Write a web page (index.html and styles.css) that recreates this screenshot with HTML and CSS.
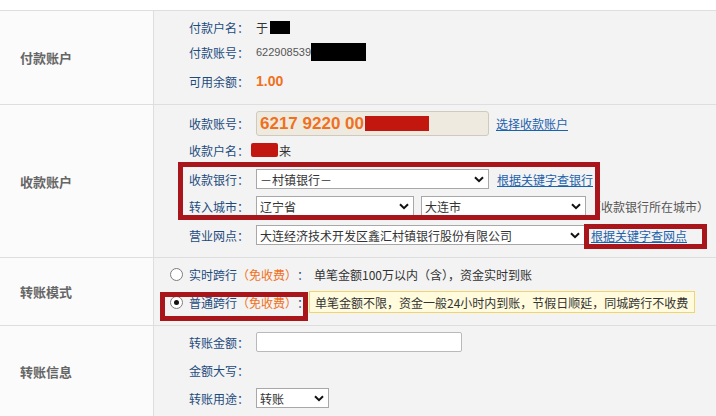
FILE: index.html
```html
<!DOCTYPE html>
<html lang="zh-CN">
<head>
<meta charset="utf-8">
<title>转账</title>
<link rel="stylesheet" href="styles.css">
</head>
<body>
<div class="page">
  <div class="form">
    <div class="row r1">
      <div class="head">付款账户</div>
      <div class="body">
        <div class="line l1"><span class="lbl">付款户名：</span><span class="val">于</span><span class="blk blk-name"></span></div>
        <div class="line l2"><span class="lbl">付款账号：</span><span class="num">622908539</span><span class="blk blk-acct"></span></div>
        <div class="line l3"><span class="lbl">可用余额：</span><span class="money">1.00</span></div>
      </div>
    </div>
    <div class="row r2">
      <div class="head">收款账户</div>
      <div class="body">
        <div class="line acct-line">
          <span class="lbl">收款账号：</span>
          <div class="acct-input"><span class="acct-num">6217 9220 00</span><span class="red red-acct"></span></div>
          <a class="link gap7" href="#">选择收款账户</a>
        </div>
        <div class="line name-line"><span class="lbl">收款户名：</span><span class="red red-name"></span><span class="val">来</span></div>
        <div class="line bank-line">
          <span class="lbl">收款银行：</span>
          <div class="sel w-bank"><span>－村镇银行－</span><svg class="chev" width="10" height="7" viewBox="0 0 10 7"><path d="M1 1.2 L5 5.2 L9 1.2" fill="none" stroke="#111" stroke-width="2"/></svg></div>
          <a class="link gap8" href="#">根据关键字查银行</a>
        </div>
        <div class="line city-line">
          <span class="lbl">转入城市：</span>
          <div class="sel w-prov"><span>辽宁省</span><svg class="chev" width="10" height="7" viewBox="0 0 10 7"><path d="M1 1.2 L5 5.2 L9 1.2" fill="none" stroke="#111" stroke-width="2"/></svg></div>
          <div class="sel w-city"><span>大连市</span><svg class="chev" width="10" height="7" viewBox="0 0 10 7"><path d="M1 1.2 L5 5.2 L9 1.2" fill="none" stroke="#111" stroke-width="2"/></svg></div>
          <span class="hint">（收款银行所在城市）</span>
        </div>
        <div class="line branch-line">
          <span class="lbl">营业网点：</span>
          <div class="sel w-branch"><span>大连经济技术开发区鑫汇村镇银行股份有限公司</span><svg class="chev" width="10" height="7" viewBox="0 0 10 7"><path d="M1 1.2 L5 5.2 L9 1.2" fill="none" stroke="#111" stroke-width="2"/></svg></div>
          <a class="link gap6" href="#">根据关键字查网点</a>
        </div>
      </div>
    </div>
    <div class="row r3">
      <div class="head">转账模式</div>
      <div class="body">
        <div class="line mode1">
          <span class="radio"></span>
          <span class="mode">实时跨行</span><span class="free">（免收费）</span><span class="mode">：</span>
          <span class="desc">单笔金额100万以内（含），资金实时到账</span>
        </div>
        <div class="line mode2">
          <span class="radio checked"></span>
          <span class="mode">普通跨行</span><span class="free">（免收费）</span><span class="mode">：</span>
          <span class="tip">单笔金额不限，资金一般24小时内到账，节假日顺延，同城跨行不收费</span>
        </div>
      </div>
    </div>
    <div class="row r4">
      <div class="head">转账信息</div>
      <div class="body">
        <div class="line amt-line"><span class="lbl">转账金额：</span><div class="text-input"></div></div>
        <div class="line cap-line"><span class="lbl">金额大写：</span></div>
        <div class="line use-line">
          <span class="lbl">转账用途：</span>
          <div class="sel w-use"><span>转账</span><svg class="chev" width="10" height="7" viewBox="0 0 10 7"><path d="M1 1.2 L5 5.2 L9 1.2" fill="none" stroke="#111" stroke-width="2"/></svg></div>
        </div>
      </div>
    </div>
  </div>
  <div class="mark mark-bank"></div>
  <div class="mark mark-branch"></div>
  <div class="mark mark-mode"></div>
</div>
</body>
</html>
```
FILE: styles.css
```css
* { box-sizing: border-box; }
html, body { margin: 0; padding: 0; background: #fff; }
body {
  font-family: "Noto Sans CJK SC", "Liberation Sans", sans-serif;
  font-size: 12px;
  color: #333;
  width: 716px;
  height: 416px;
  overflow: hidden;
}
.page { position: relative; width: 716px; height: 416px; padding-top: 10px; }
.form { border-top: 1px solid #dedede; }
.row {
  display: grid;
  grid-template-columns: 154px 1fr;
  border-bottom: 1px solid #dedede;
}
.r1 { height: 94px; }
.r2 { height: 153px; }
.r3 { height: 68px; }
.r4 { height: 92px; }
.head {
  background: #fbfbfb;
  border-right: 1px solid #dedede;
  display: flex;
  align-items: center;
  padding-left: 20px;
  font-size: 13px;
  font-weight: bold;
  color: #666;
}
.body {
  background: #f3f3f3;
  padding-left: 35px;
  display: flex;
  flex-direction: column;
}
.line { display: flex; align-items: center; height: 20px; white-space: nowrap; }
.lbl { width: 67px; flex: none; color: #1d4b7d; }
.val { color: #333; }
.num { font-family: "Liberation Sans", sans-serif; font-size: 11px; color: #555; }
.money { font-family: "Liberation Sans", sans-serif; font-size: 14px; font-weight: bold; color: #f07020; }
.blk { display: inline-block; background: #000; }
.blk-name { width: 20px; height: 13px; margin-left: 2px; }
.blk-acct { width: 55px; height: 18px; }

.r1 .body { padding-top: 6px; }
.l2 { margin-top: 5px; }
.l3 { margin-top: 9px; }

.r2 .body { padding-top: 6px; }
.acct-line { height: 25px; }
.acct-input {
  width: 233px;
  height: 25px;
  background: #eeeadf;
  border: 1px solid #cfcabd;
  border-radius: 3px;
  display: flex;
  align-items: center;
  padding-left: 3px;
}
.acct-num { font-family: "Liberation Sans", sans-serif; font-size: 17px; font-weight: bold; color: #f07020; }
.red { display: inline-block; background: #c2170f; }
.red-acct { width: 64px; height: 15px; margin-left: 1px; }
.red-name { width: 27px; height: 14px; margin-left: -5px; margin-right: 1px; border-radius: 2px; }
.name-line { height: 16px; margin-top: 6px; }
.bank-line { margin-top: 11px; }
.city-line { margin-top: 7px; }
.branch-line { margin-top: 9px; }

.link { color: #1b62ad; text-decoration: underline; }
.gap7 { margin-left: 7px; }
.gap8 { margin-left: 8px; }
.gap6 { margin-left: 6px; }
.hint { margin-left: 3px; color: #555; }

.sel {
  flex: none;
  height: 20px;
  background: #fff;
  border: 1px solid #a8a8a8;
  display: flex;
  align-items: center;
  justify-content: space-between;
  padding: 0 4px 0 3px;
  color: #333;
  overflow: hidden;
}
.chev { flex: none; }
.w-bank { width: 233px; }
.w-prov { width: 158px; }
.w-city { width: 165px; margin-left: 7px; }
.w-branch { width: 329px; }
.w-use { width: 73px; }

.r3 .body { padding-top: 6px; padding-left: 16px; }
.mode2 { height: 22px; margin-top: 7px; }
.radio {
  width: 13px; height: 13px;
  border: 1px solid #7d7d7d;
  border-radius: 50%;
  background: #fff;
  margin-right: 6px;
  display: flex;
  align-items: center;
  justify-content: center;
  flex: none;
}
.radio.checked::after {
  content: "";
  width: 5px; height: 5px;
  border-radius: 50%;
  background: #111;
}
.mode { color: #1d4b7d; }
.free { color: #f07020; }
.desc { margin-left: 5px; color: #333; }
.tip {
  height: 22px;
  display: flex;
  align-items: center;
  background: #fffbdc;
  border: 1px solid #f0d56c;
  padding: 0 6px 0 5px;
  color: #333;
}

.r4 .body { padding-top: 6px; }
.text-input {
  width: 206px; height: 20px;
  background: #fff;
  border: 1px solid #b9b9b9;
  border-radius: 2px;
}
.cap-line { height: 16px; margin-top: 10px; }
.use-line { margin-top: 10px; }

.mark { position: absolute; border: 5px solid #a8161b; }
.mark-bank { left: 178px; top: 162px; width: 422px; height: 58px; }
.mark-branch { left: 584px; top: 224px; width: 123px; height: 25px; }
.mark-mode { left: 160px; top: 292px; width: 148px; height: 29px; }
```
